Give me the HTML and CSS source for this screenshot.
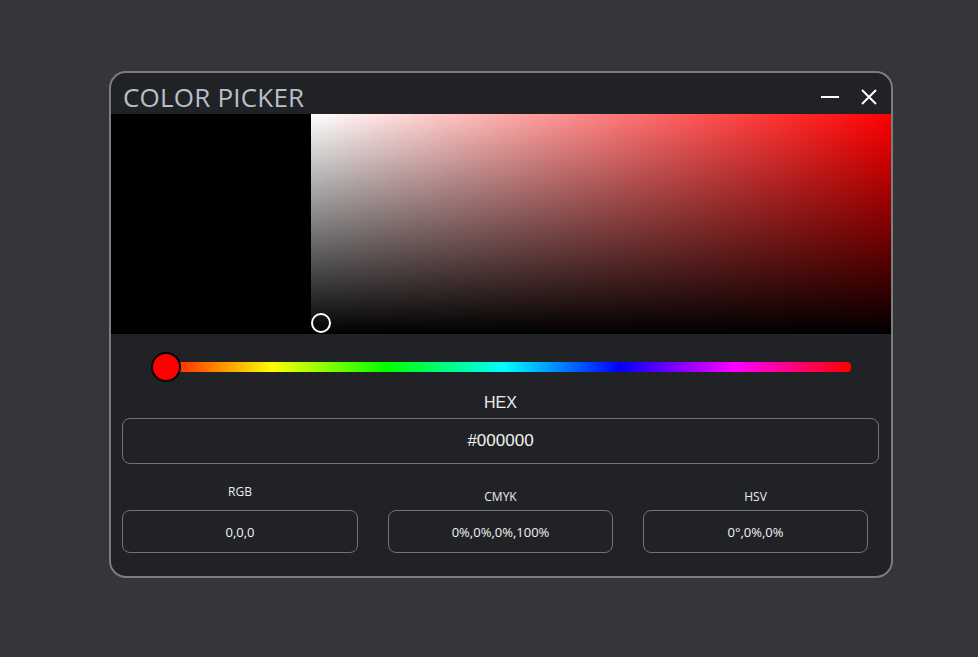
FILE: index.html
```html
<!DOCTYPE html>
<html>
<head>
<meta charset="utf-8">
<link rel="stylesheet" href="styles.css">
</head>
<body>
<div class="window">
  <div class="titlebar">
    <div class="title">COLOR PICKER</div>
    <div class="controls">
      <svg class="ctl min" width="18" height="14" viewBox="0 0 18 14"><path d="M0 7 H18" stroke="#fff" stroke-width="2"/></svg>
      <svg class="ctl close" width="16" height="16" viewBox="0 0 16 16"><path d="M1 1 L15 15 M15 1 L1 15" stroke="#fff" stroke-width="2"/></svg>
    </div>
  </div>
  <div class="colorarea">
    <div class="preview"></div>
    <div class="sv">
      <div class="marker"></div>
    </div>
  </div>
  <div class="body">
    <div class="hue">
      <div class="track"></div>
      <div class="thumb"></div>
    </div>
    <div class="hexlabel">HEX</div>
    <div class="hexbox">#000000</div>
    <div class="fields">
      <div class="field">
        <div class="flabel rgb">RGB</div>
        <div class="fbox">0,0,0</div>
      </div>
      <div class="field">
        <div class="flabel">CMYK</div>
        <div class="fbox">0%,0%,0%,100%</div>
      </div>
      <div class="field">
        <div class="flabel">HSV</div>
        <div class="fbox">0°,0%,0%</div>
      </div>
    </div>
  </div>
</div>
</body>
</html>
```

FILE: styles.css
```css
html, body {
  margin: 0;
  padding: 0;
}
body {
  background: #35363a;
  width: 978px;
  height: 657px;
  padding: 71px 0 0 109px;
  box-sizing: border-box;
  font-family: "Open Sans", "Noto Sans", sans-serif;
}
.window {
  width: 784px;
  height: 507px;
  box-sizing: border-box;
  border: 2px solid #7c7c7f;
  border-radius: 17px;
  background: #212226;
  overflow: hidden;
  display: flex;
  flex-direction: column;
}
.titlebar {
  height: 41px;
  display: flex;
  align-items: center;
  justify-content: space-between;
  padding: 0 14px 0 12px;
}
.title {
  font-size: 26px;
  color: #b8bfcc;
  line-height: 1;
  margin-top: 7px;
  letter-spacing: 0.2px;
}
.controls {
  display: flex;
  align-items: center;
  gap: 22px;
  margin-top: 7px;
}
.colorarea {
  height: 220px;
  display: flex;
}
.preview {
  width: 200px;
  background: #000;
}
.sv {
  flex: 1;
  position: relative;
  background: linear-gradient(to top, #000, rgba(0,0,0,0)), linear-gradient(to right, #fff, #f00);
}
.marker {
  position: absolute;
  left: 0;
  top: 199px;
  width: 16px;
  height: 16px;
  border: 2px solid #fff;
  border-radius: 50%;
}
.body {
  flex: 1;
  padding: 0 12px 0 11px;
  display: flex;
  flex-direction: column;
}
.hue {
  position: relative;
  height: 30px;
  margin: 18px 0 0 28px;
  width: 701px;
}
.track {
  position: absolute;
  left: 6px;
  right: 0;
  top: 10px;
  height: 10px;
  border-radius: 0 4px 4px 0;
  background: linear-gradient(to right, #f00 0%, #ff0 16.67%, #0f0 33.33%, #0ff 50%, #00f 66.67%, #f0f 83.33%, #f00 100%);
}
.thumb {
  position: absolute;
  left: 1px;
  top: 0;
  width: 26px;
  height: 26px;
  box-sizing: content-box;
  border: 2px solid #000;
  border-radius: 50%;
  background: #f00;
}
.hexlabel {
  margin-top: 11px;
  text-align: center;
  font-family: "Liberation Sans", Arial, sans-serif;
  font-size: 16px;
  line-height: 20px;
  color: #ececec;
}
.hexbox {
  margin-top: 5px;
  height: 46px;
  box-sizing: border-box;
  border: 1px solid #737377;
  border-radius: 8px;
  display: flex;
  align-items: center;
  justify-content: center;
  font-family: "Liberation Sans", Arial, sans-serif;
  font-size: 17px;
  color: #f2f2f2;
}
.fields {
  margin-top: 17px;
  display: grid;
  grid-template-columns: 236px 225px 225px;
  column-gap: 30px;
}
.field {
  display: flex;
  flex-direction: column;
  align-items: stretch;
}
.flabel {
  height: 29px;
  text-align: center;
  font-size: 12px;
  line-height: 16px;
  padding-top: 8px;
  box-sizing: border-box;
  color: #ececec;
}
.flabel.rgb {
  padding-top: 3px;
}
.fbox {
  height: 43px;
  box-sizing: border-box;
  border: 1px solid #737377;
  border-radius: 8px;
  display: flex;
  align-items: center;
  justify-content: center;
  font-size: 13px;
  color: #f2f2f2;
}
```
